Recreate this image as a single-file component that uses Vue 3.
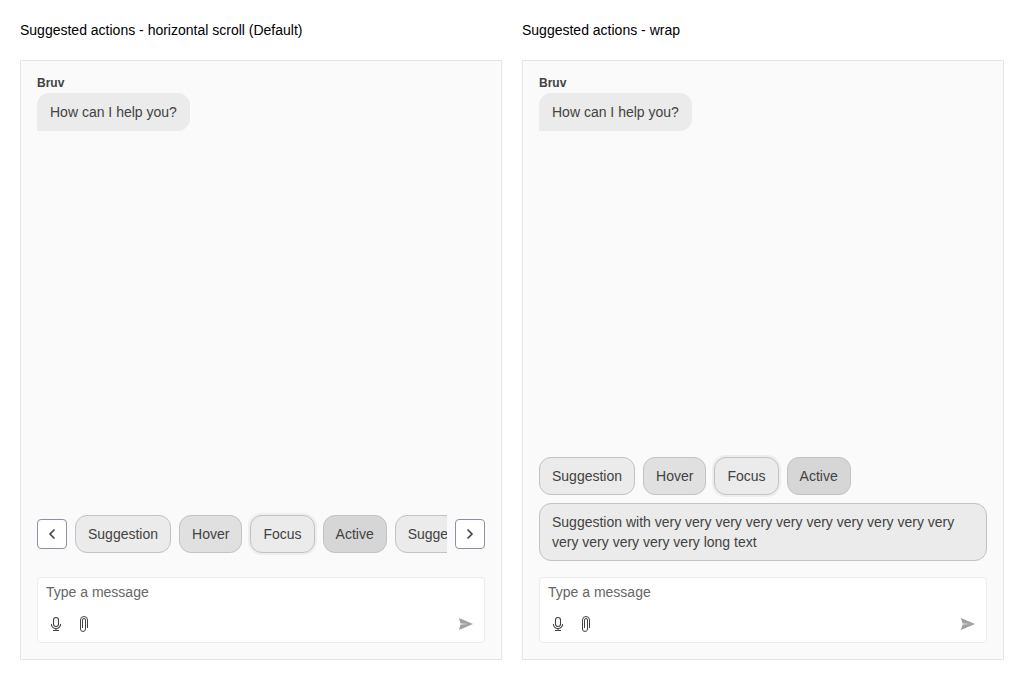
<script setup>
import { ref } from 'vue'

const base = [
  { text: 'Suggestion', state: '' },
  { text: 'Hover', state: 'is-hover' },
  { text: 'Focus', state: 'is-focus' },
  { text: 'Active', state: 'is-active' },
]
const longText = 'Suggestion with very very very very very very very very very very very very very very very long text'

const chats = ref([
  { id: 'scroll', title: 'Suggested actions - horizontal scroll (Default)', wrap: false, draft: '', actions: [...base, { text: 'Suggestion with long text', state: '' }] },
  { id: 'wrap', title: 'Suggested actions - wrap', wrap: true, draft: '', actions: [...base, { text: longText, state: '' }] },
])

function scrollStrip(id, dx) {
  document.getElementById('strip-' + id)?.scrollBy({ left: dx, behavior: 'smooth' })
}
</script>

<template>
  <main class="page">
    <section v-for="chat in chats" :key="chat.id" class="demo">
      <h2 class="title">{{ chat.title }}</h2>
      <div class="chat">
        <div class="messages">
          <p class="author">Bruv</p>
          <p class="bubble">How can I help you?</p>
        </div>

        <div v-if="chat.wrap" class="actions-wrap">
          <button v-for="a in chat.actions" :key="a.text" type="button" class="pill" :class="a.state">{{ a.text }}</button>
        </div>
        <div v-else class="actions-scroll">
          <button type="button" class="nav" aria-label="Scroll left" @click="scrollStrip(chat.id, -120)">
            <svg viewBox="0 0 16 16" class="icon"><path d="M10.500 3.500 6 8l4.500 4.500" fill="none" stroke="currentColor" stroke-width="1.6" /></svg>
          </button>
          <div :id="'strip-' + chat.id" class="strip">
            <button v-for="a in chat.actions" :key="a.text" type="button" class="pill" :class="a.state">{{ a.text }}</button>
          </div>
          <button type="button" class="nav" aria-label="Scroll right" @click="scrollStrip(chat.id, 120)">
            <svg viewBox="0 0 16 16" class="icon"><path d="M5.500 3.500 10 8l-4.500 4.500" fill="none" stroke="currentColor" stroke-width="1.6" /></svg>
          </button>
        </div>

        <form class="composer" @submit.prevent>
          <input v-model="chat.draft" class="field" type="text" placeholder="Type a message" aria-label="Type a message" />
          <div class="tools">
            <button type="button" class="tool" aria-label="Voice input">
              <svg viewBox="0 0 16 16" class="icon" fill="none" stroke="currentColor" stroke-width="1.1">
                <rect x="5.500" y="1.500" width="5" height="9" rx="2.500" />
                <path d="M3.500 8v.5a4.500 4 0 0 0 9 0V8M8 12.500V14M5 14.500h6" />
              </svg>
            </button>
            <button type="button" class="tool" aria-label="Attach file">
              <svg viewBox="0 0 16 16" class="icon" fill="none" stroke="currentColor">
                <path d="M11.500 12V4a3.500 3.500 0 0 0-7 0v9a2.500 2.500 0 0 0 5 0V4a1.500 1.500 0 0 0-3 0v8" />
              </svg>
            </button>
            <button type="submit" class="tool send" aria-label="Send">
              <svg viewBox="0 0 16 16" class="icon"><path d="M1 2l14 6-14 6 1.500-5.400 8.500-.6-8.500-.6z" fill="currentColor" /></svg>
            </button>
          </div>
        </form>
      </div>
    </section>
  </main>
</template>

<style>
body {
  background: #fff;
}
</style>

<style scoped>
.page {
  display: grid;
  grid-template-columns: 1fr 1fr;
  gap: 20px;
  padding: 20px;
  min-height: 100vh;
  box-sizing: border-box;
  font: 14px/20px "Liberation Sans", Arial, sans-serif;
  color: #424242;
}
.demo {
  display: flex;
  flex-direction: column;
  gap: 20px;
  min-width: 0;
}
.title {
  margin: 0;
  font: inherit;
  color: #000;
}
.chat {
  flex: 1;
  display: flex;
  flex-direction: column;
  gap: 16px;
  padding: 16px;
  border: 1px solid #e6e6e6;
  background: #fafafa;
}
.messages {
  flex: 1;
  display: flex;
  flex-direction: column;
  align-items: flex-start;
  gap: 4px;
}
.author {
  margin: 0;
  font-size: 12px;
  line-height: 12px;
  font-weight: 700;
}
.bubble {
  margin: 0;
  padding: 8px 12px;
  border: 1px solid #ebebeb;
  border-radius: 12px 12px 12px 0;
  background: #ebebeb;
}
.pill {
  flex: none;
  max-width: 100%;
  margin: 0;
  padding: 8px 12px;
  border: 1px solid #c2c2c2;
  border-radius: 12px;
  background: #ebebeb;
  color: inherit;
  font: inherit;
  text-align: left;
  cursor: pointer;
}
.pill:hover,
.is-hover {
  background: #e0e0e0;
}
.pill:focus-visible,
.is-focus {
  outline: none;
  box-shadow: 0 0 0 2px #eeeeee;
}
.pill:active,
.is-active {
  background: #d6d6d6;
}
.actions-wrap {
  display: flex;
  flex-wrap: wrap;
  gap: 8px;
}
.actions-scroll {
  display: flex;
  align-items: center;
  gap: 8px;
}
.strip {
  flex: 1;
  min-width: 0;
  display: flex;
  gap: 8px;
  padding: 8px 0;
  overflow-x: auto;
  scrollbar-width: none;
}
.strip .pill {
  max-width: none;
  white-space: nowrap;
}
.nav {
  flex: none;
  display: grid;
  place-items: center;
  width: 30px;
  height: 30px;
  padding: 0;
  border: 1px solid #8f8fa3;
  border-radius: 4px;
  background: #fff;
  color: #424242;
  cursor: pointer;
}
.icon {
  display: block;
  width: 16px;
  height: 16px;
}
.composer {
  display: flex;
  flex-direction: column;
  gap: 8px;
  padding: 4px;
  border: 1px solid #ebebeb;
  border-radius: 4px;
  background: #fff;
}
.field {
  height: 20px;
  padding: 0 4px;
  border: 0;
  outline: none;
  background: none;
  color: inherit;
  font: inherit;
}
.field::placeholder {
  color: #666;
  opacity: 1;
}
.tools {
  display: flex;
}
.tool {
  display: grid;
  place-items: center;
  width: 28px;
  height: 28px;
  padding: 0;
  border: 0;
  background: none;
  color: #424242;
  cursor: pointer;
}
.send {
  margin-left: auto;
  color: #a0a0a0;
}
</style>
